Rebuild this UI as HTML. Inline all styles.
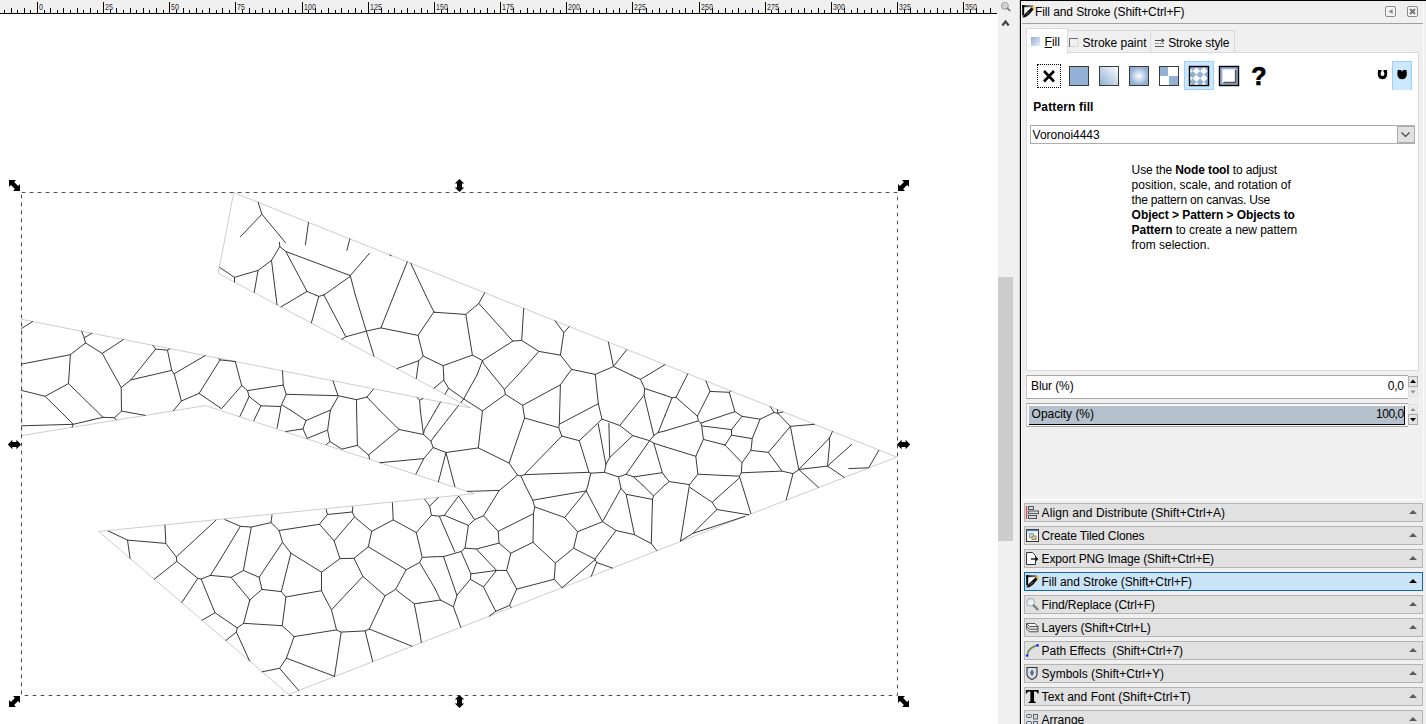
<!DOCTYPE html>
<html lang="en"><head><meta charset="utf-8"><title>Inkscape - Fill and Stroke</title>
<style>
html,body{margin:0;padding:0}
body{width:1426px;height:724px;overflow:hidden;background:#fff;position:relative;font:12px 'Liberation Sans',sans-serif;color:#000}
.a{position:absolute}
.t{position:absolute;white-space:pre;font-size:12px}
svg{position:absolute;overflow:visible}
.di{position:absolute;left:1024px;width:397px;height:17px;border:1px solid #b4b4b4;background:#e1e1e1}
.di.sel{border-color:#1464b4;background:#cce4f7}
.di svg{left:0;top:1px}
.tri{position:absolute;left:384px;top:6px;width:0;height:0;border-left:4px solid transparent;border-right:4px solid transparent;border-bottom:4px solid #5c5c5c}
.sel .tri{border-bottom-color:#000}
.ic{position:absolute;width:18px;height:18px;border:1px solid #222;box-sizing:border-box;top:66px}
</style></head><body>
<div class="a" id="canvas" style="left:0;top:0;width:998px;height:724px;background:#fff"></div><svg id="ruler" width="998" height="15" style="left:0;top:0" shape-rendering="crispEdges"><rect x="0" y="0" width="998" height="13" fill="#f0f0f0"/><rect x="0" y="13" width="997" height="1" fill="#000"/><path d="M4.5 10V13M11.5 8V13M17.5 10V13M24.5 8V13M30.5 10V13M37.5 2V13M44.5 10V13M50.5 8V13M57.5 10V13M63.5 8V13M70.5 10V13M77.5 8V13M83.5 10V13M90.5 8V13M97.5 10V13M103.5 2V13M110.5 10V13M116.5 8V13M123.5 10V13M130.5 8V13M136.5 10V13M143.5 8V13M149.5 10V13M156.5 8V13M163.5 10V13M169.5 2V13M176.5 10V13M183.5 8V13M189.5 10V13M196.5 8V13M202.5 10V13M209.5 8V13M216.5 10V13M222.5 8V13M229.5 10V13M235.5 2V13M242.5 10V13M249.5 8V13M255.5 10V13M262.5 8V13M269.5 10V13M275.5 8V13M282.5 10V13M288.5 8V13M295.5 10V13M302.5 2V13M308.5 10V13M315.5 8V13M321.5 10V13M328.5 8V13M335.5 10V13M341.5 8V13M348.5 10V13M355.5 8V13M361.5 10V13M368.5 2V13M374.5 10V13M381.5 8V13M388.5 10V13M394.5 8V13M401.5 10V13M407.5 8V13M414.5 10V13M421.5 8V13M427.5 10V13M434.5 2V13M441.5 10V13M447.5 8V13M454.5 10V13M460.5 8V13M467.5 10V13M474.5 8V13M480.5 10V13M487.5 8V13M494.5 10V13M500.5 2V13M507.5 10V13M513.5 8V13M520.5 10V13M527.5 8V13M533.5 10V13M540.5 8V13M546.5 10V13M553.5 8V13M560.5 10V13M566.5 2V13M573.5 10V13M580.5 8V13M586.5 10V13M593.5 8V13M599.5 10V13M606.5 8V13M613.5 10V13M619.5 8V13M626.5 10V13M632.5 2V13M639.5 10V13M646.5 8V13M652.5 10V13M659.5 8V13M666.5 10V13M672.5 8V13M679.5 10V13M685.5 8V13M692.5 10V13M699.5 2V13M705.5 10V13M712.5 8V13M718.5 10V13M725.5 8V13M732.5 10V13M738.5 8V13M745.5 10V13M752.5 8V13M758.5 10V13M765.5 2V13M771.5 10V13M778.5 8V13M785.5 10V13M791.5 8V13M798.5 10V13M804.5 8V13M811.5 10V13M818.5 8V13M824.5 10V13M831.5 2V13M838.5 10V13M844.5 8V13M851.5 10V13M857.5 8V13M864.5 10V13M871.5 8V13M877.5 10V13M884.5 8V13M890.5 10V13M897.5 2V13M904.5 10V13M910.5 8V13M917.5 10V13M924.5 8V13M930.5 10V13M937.5 8V13M943.5 10V13M950.5 8V13M957.5 10V13M963.5 2V13M970.5 10V13M976.5 8V13M983.5 10V13M990.5 8V13" stroke="#000" stroke-width="1" fill="none"/></svg><span class="t" style="left:39.0px;top:2.38px;line-height:11px;font-size:9px;color:#2a2a2a;transform:scaleX(0.788);transform-origin:0 0;">0</span><span class="t" style="left:105.0px;top:2.38px;line-height:11px;font-size:9px;color:#2a2a2a;transform:scaleX(0.789);transform-origin:0 0;">25</span><span class="t" style="left:171.0px;top:2.38px;line-height:11px;font-size:9px;color:#2a2a2a;transform:scaleX(0.789);transform-origin:0 0;">50</span><span class="t" style="left:237.0px;top:2.38px;line-height:11px;font-size:9px;color:#2a2a2a;transform:scaleX(0.789);transform-origin:0 0;">75</span><span class="t" style="left:304.0px;top:2.38px;line-height:11px;font-size:9px;color:#2a2a2a;transform:scaleX(0.788);transform-origin:0 0;">100</span><span class="t" style="left:370.0px;top:2.38px;line-height:11px;font-size:9px;color:#2a2a2a;transform:scaleX(0.788);transform-origin:0 0;">125</span><span class="t" style="left:436.0px;top:2.38px;line-height:11px;font-size:9px;color:#2a2a2a;transform:scaleX(0.788);transform-origin:0 0;">150</span><span class="t" style="left:502.0px;top:2.38px;line-height:11px;font-size:9px;color:#2a2a2a;transform:scaleX(0.788);transform-origin:0 0;">175</span><span class="t" style="left:568.0px;top:2.38px;line-height:11px;font-size:9px;color:#2a2a2a;transform:scaleX(0.788);transform-origin:0 0;">200</span><span class="t" style="left:634.0px;top:2.38px;line-height:11px;font-size:9px;color:#2a2a2a;transform:scaleX(0.788);transform-origin:0 0;">225</span><span class="t" style="left:701.0px;top:2.38px;line-height:11px;font-size:9px;color:#2a2a2a;transform:scaleX(0.788);transform-origin:0 0;">250</span><span class="t" style="left:767.0px;top:2.38px;line-height:11px;font-size:9px;color:#2a2a2a;transform:scaleX(0.788);transform-origin:0 0;">275</span><span class="t" style="left:833.0px;top:2.38px;line-height:11px;font-size:9px;color:#2a2a2a;transform:scaleX(0.788);transform-origin:0 0;">300</span><span class="t" style="left:899.0px;top:2.38px;line-height:11px;font-size:9px;color:#2a2a2a;transform:scaleX(0.788);transform-origin:0 0;">325</span><span class="t" style="left:965.0px;top:2.38px;line-height:11px;font-size:9px;color:#2a2a2a;transform:scaleX(0.788);transform-origin:0 0;">350</span><div class="a" style="left:998px;top:0;width:22px;height:724px;background:#f0f0f0"></div><div class="a" style="left:998px;top:277px;width:15px;height:264px;background:#cdcdcd"></div><svg width="16" height="30" style="left:998px;top:0" viewBox="0 0 16 30">
<circle cx="6.9" cy="5.8" r="3.3" fill="#dedede" stroke="#a2a2a2" stroke-width="1.2"/>
<path d="M5.6 4.6V7M7.6 4.6V7" stroke="#b4b4b4" stroke-width=".9"/>
<path d="M9.4 8.2L11.7 10.6" stroke="#6a6a6a" stroke-width="1.5" stroke-linecap="round"/>
<path d="M4.4 25.4L7.55 21.6L10.7 25.4" stroke="#444" stroke-width="2.3" fill="none" stroke-linejoin="miter"/>
</svg><div class="a" style="left:1020px;top:0;width:406px;height:724px;background:#f0f0f0"></div><div class="a" style="left:1020px;top:0;width:406px;height:1px;background:#000"></div><div class="a" style="left:1020px;top:0;width:1px;height:724px;background:#000;box-shadow:-1px 0 0 rgba(0,0,0,.15)"></div><div class="a" style="left:1022px;top:23px;width:401px;height:1px;background:#a0a0a0;"></div><svg width="13" height="13" viewBox="0 0 13 13" style="left:1022px;top:5px">
<defs><linearGradient id="fsg1" gradientUnits="userSpaceOnUse" x1="0" y1="0" x2="11" y2="0"><stop offset="0" stop-color="#000"/><stop offset="1" stop-color="#8a8a8a"/></linearGradient></defs>
<path d="M1 1H11L1.5 11.5Z" fill="#fff"/>
<path d="M0.2 1.2H11" stroke="url(#fsg1)" stroke-width="2"/><path d="M1.2 0.2V10.5" stroke="#000" stroke-width="2"/>
<path d="M0.2 12.6L3.2 8.6L9.6 2.2L11.7 4.2L7.2 9.6L3.4 12.2Z" fill="#0a0a0a"/>
<path d="M10.7 1.6L12.3 1.2L12.4 5.8L11 4.6Z" fill="#f2b400"/>
<path d="M4.2 9.9L7.2 7" stroke="#8a8a8a" stroke-width=".8"/>
</svg><span class="t" style="left:1034.9px;top:5.34px;line-height:15px;letter-spacing:-0.082px;">Fill and Stroke (Shift+Ctrl+F)</span><svg width="40" height="14" viewBox="0 0 40 14" style="left:1383px;top:4px">
<rect x="2.5" y="2.5" width="10" height="10" rx="1.5" fill="#f4f4f4" stroke="#8c8c8c"/>
<path d="M9.6 5L5.4 7.5L9.6 10Z" fill="#8c8c8c"/>
<rect x="24.5" y="2.5" width="10" height="10" rx="1.5" fill="#f4f4f4" stroke="#8c8c8c"/>
<path d="M27 5L32 10M32 5L27 10" stroke="#777" stroke-width="2"/>
</svg><div class="a" style="left:1067px;top:30px;width:84px;height:22px;border:1px solid #d9d9d9;border-bottom:none;background:#f0f0f0"></div><div class="a" style="left:1151px;top:30px;width:83px;height:22px;border:1px solid #d9d9d9;border-bottom:none;border-left:1px solid #d9d9d9;margin-left:-1px;background:#f0f0f0"></div><div class="a" style="left:1026px;top:52px;width:391px;height:317px;border:1px solid #d9d9d9;background:#fff"></div><div class="a" style="left:1026px;top:28px;width:40px;height:25px;border:1px solid #d9d9d9;border-bottom:none;background:#fff"></div><svg width="10" height="10" style="left:1031px;top:37px"><defs><linearGradient id="tg1" x1="0" y1="0" x2="1" y2="1"><stop offset="0" stop-color="#8fabcf"/><stop offset="1" stop-color="#eef3f9"/></linearGradient></defs><rect width="9" height="9" fill="url(#tg1)"/></svg><span class="t" style="left:1044.6px;top:35.34px;line-height:15px;letter-spacing:-0.036px;"><u>F</u>ill</span><svg width="10" height="10" style="left:1069px;top:38px"><path d="M0.5 9V0.5H9" stroke="#6a6a6a" fill="none"/><path d="M9 0.5V8.5H1" stroke="#d8d8d8" fill="none"/></svg><span class="t" style="left:1082.6px;top:36.34px;line-height:15px;letter-spacing:-0.012px;">Stroke paint</span><svg width="10" height="10" style="left:1155px;top:38px"><path d="M0 2.5H6M7 0.8L9.2 2.5L7 4.2Z" stroke="#444" stroke-width="1" fill="#444"/><path d="M0 5.5H9" stroke="#777" stroke-dasharray="1.5 1"/><path d="M0 8.5H9" stroke="#555"/></svg><span class="t" style="left:1168.2px;top:36.34px;line-height:15px;letter-spacing:-0.125px;">Stroke style</span><div class="a" style="left:1184px;top:61px;width:28px;height:27px;border:1px solid #99d1ff;background:#cce8ff"></div><div class="a" style="left:1392px;top:61px;width:18px;height:28px;border:1px solid #99d1ff;background:#cce8ff;border-bottom:none"></div><div class="a" style="left:1037px;top:64px;width:22px;height:22px;border:1px dotted #000"></div><svg width="24" height="24" style="left:1037px;top:64px"><path d="M7 7L17 17.5M17 7L7 17.5" stroke="#000" stroke-width="2.6"/></svg><svg width="200" height="22" style="left:1068px;top:65px" viewBox="0 0 200 22">
<defs>
<linearGradient id="lg1" x1="0" y1="1" x2="1" y2="0"><stop offset="0" stop-color="#8eaed2"/><stop offset="1" stop-color="#fff"/></linearGradient>
<radialGradient id="rg1"><stop offset="0" stop-color="#fff"/><stop offset="1" stop-color="#8eaed2"/></radialGradient>
<pattern id="dia" x="-0.3" y="0.9" width="7.4" height="7.4" patternUnits="userSpaceOnUse"><path d="M3.7 0L7.4 3.7L3.7 7.4L0 3.7Z" fill="#93b1d5"/></pattern>
</defs>
<rect x="1.5" y="1.5" width="19" height="19" fill="#93b1d5" stroke="#3a3a3a"/>
<rect x="31.5" y="1.5" width="19" height="19" fill="url(#lg1)" stroke="#3a3a3a"/>
<rect x="61.5" y="1.5" width="19" height="19" fill="url(#rg1)" stroke="#3a3a3a"/>
<rect x="91.5" y="1.5" width="19" height="19" fill="#fff" stroke="#3a3a3a"/>
<rect x="92" y="2" width="8" height="9" fill="#93b1d5"/><rect x="101" y="11" width="9" height="9" fill="#93b1d5"/>
<rect x="121.5" y="1.5" width="19" height="19" fill="#fff"/>
<clipPath id="pc"><rect x="122" y="2" width="18" height="18"/></clipPath><path clip-path="url(#pc)" d="M117.4 -1.5L121.10000000000001 2.2L117.4 5.9L113.7 2.2ZM117.4 5.8999999999999995L121.10000000000001 9.6L117.4 13.3L113.7 9.6ZM117.4 13.25L121.10000000000001 16.95L117.4 20.65L113.7 16.95ZM117.4 20.6L121.10000000000001 24.3L117.4 28.0L113.7 24.3ZM124.8 -1.5L128.5 2.2L124.8 5.9L121.1 2.2ZM124.8 5.8999999999999995L128.5 9.6L124.8 13.3L121.1 9.6ZM124.8 13.25L128.5 16.95L124.8 20.65L121.1 16.95ZM124.8 20.6L128.5 24.3L124.8 28.0L121.1 24.3ZM132.1 -1.5L135.79999999999998 2.2L132.1 5.9L128.4 2.2ZM132.1 5.8999999999999995L135.79999999999998 9.6L132.1 13.3L128.4 9.6ZM132.1 13.25L135.79999999999998 16.95L132.1 20.65L128.4 16.95ZM132.1 20.6L135.79999999999998 24.3L132.1 28.0L128.4 24.3ZM139.5 -1.5L143.2 2.2L139.5 5.9L135.8 2.2ZM139.5 5.8999999999999995L143.2 9.6L139.5 13.3L135.8 9.6ZM139.5 13.25L143.2 16.95L139.5 20.65L135.8 16.95ZM139.5 20.6L143.2 24.3L139.5 28.0L135.8 24.3Z" fill="#93b1d5"/><rect x="121.5" y="1.5" width="19" height="19" fill="none" stroke="#000" stroke-width="1.4"/>
<rect x="151.5" y="1.5" width="19" height="19" fill="#93b1d5" stroke="#000" stroke-width="1.4"/>
<rect x="154.4" y="4.3" width="13" height="13.3" fill="#fff"/>
<path d="M167.6 5V17.4H155.5" stroke="#555" stroke-width="1.5" fill="none"/>
</svg><span class="t" style="left:1251.2px;top:60.84px;line-height:31px;font-size:25px;font-weight:bold;"><span style="-webkit-text-stroke:0.7px #000">?</span></span><svg width="40" height="12" style="left:1377.5px;top:70.3px" viewBox="0 0 40 12">
<path d="M0 0H3.5V1.6C2.6 2.6 2.4 4.2 2.9 5.2C3.4 6.3 5.6 6.3 6.1 5.2C6.6 4.2 6.4 2.6 5.5 1.6V0H9V1.4C9.7 4 9.2 9.2 4.5 9.2C-0.2 9.2 -0.7 4 0 1.4Z" fill="#000"/>
<path transform="translate(19.6 0)" d="M0 0H3.5L4.5 1.8L5.5 0H9V1.4C9.7 4 9.2 9.2 4.5 9.2C-0.2 9.2 -0.7 4 0 1.4Z" fill="#000"/>
</svg><span class="t" style="left:1033.2px;top:99.84px;line-height:15px;font-weight:bold;letter-spacing:0.143px;">Pattern fill</span><div class="a" style="left:1030px;top:125px;width:383px;height:17px;border:1px solid #adadad;background:#fff"></div><div class="a" style="left:1397px;top:126px;width:16px;height:15px;border:1px solid #adadad;background:#e1e1e1"></div><svg width="12" height="8" style="left:1400px;top:131px"><path d="M1.5 1.5L5.5 5.5L9.5 1.5" stroke="#444" stroke-width="1.2" fill="none"/></svg><span class="t" style="left:1032.6px;top:127.84px;line-height:15px;letter-spacing:-0.037px;">Voronoi4443</span><span class="t" style="left:1131.6px;top:162.84px;line-height:15px;letter-spacing:-0.123px;">Use the <b>Node tool</b> to adjust</span><span class="t" style="left:1131.6px;top:177.84px;line-height:15px;letter-spacing:-0.007px;">position, scale, and rotation of</span><span class="t" style="left:1131.6px;top:192.84px;line-height:15px;letter-spacing:-0.189px;">the pattern on canvas. Use</span><span class="t" style="left:1131.6px;top:207.84px;line-height:15px;font-weight:bold;letter-spacing:-0.049px;">Object &gt; Pattern &gt; Objects to</span><span class="t" style="left:1131.6px;top:222.84px;line-height:15px;letter-spacing:-0.059px;"><b>Pattern</b> to create a new pattern</span><span class="t" style="left:1131.6px;top:237.84px;line-height:15px;letter-spacing:0.011px;">from selection.</span><div class="a" style="left:1026px;top:375px;width:381px;height:22px;border-top:1px solid #a8a8a8;border-bottom:1px solid #a8a8a8;border-left:1px solid #c8c8c8;background:#fff"></div><span class="t" style="left:1031.0px;top:378.84px;line-height:15px;letter-spacing:-0.093px;">Blur (%)</span><span class="t" style="left:1387.8px;top:378.84px;line-height:15px;letter-spacing:-0.229px;">0,0</span><div class="a" style="left:1026px;top:403px;width:381px;height:22px;border-top:1px solid #a8a8a8;border-bottom:1px solid #a8a8a8;border-left:1px solid #c8c8c8;background:#f6f6f6"></div><div class="a" style="left:1029px;top:406px;width:375px;height:18px;background:#b5c1cc;border-right:1px solid #000;border-bottom:1px solid #000"></div><span class="t" style="left:1031.6px;top:406.84px;line-height:15px;letter-spacing:-0.026px;">Opacity (%)</span><span class="t" style="left:1376.0px;top:406.84px;line-height:15px;letter-spacing:-0.486px;">100,0</span><svg width="12" height="52" style="left:1407px;top:375px" viewBox="0 0 12 52">
<rect x="1.5" y="1.5" width="9" height="10" fill="#e4e4e4" stroke="#adadad"/><path d="M3 8L6 4.5L9 8Z" fill="#000"/>
<rect x="1.5" y="12.5" width="9" height="9" fill="#ececec" stroke="#e0e0e0"/><path d="M3.5 15.5L6 18.5L8.5 15.5Z" fill="#8a8a8a"/>
<rect x="1.5" y="29.5" width="9" height="9" fill="#ececec" stroke="#e0e0e0"/><path d="M3.5 36L6 33L8.5 36Z" fill="#8a8a8a"/>
<rect x="1.5" y="39.5" width="9" height="10" fill="#e4e4e4" stroke="#adadad"/><path d="M3 43L6 46.5L9 43Z" fill="#000"/>
</svg><div class="a" style="left:1021px;top:499px;width:403px;height:1px;background:#fff"></div><div class="a" style="left:1423px;top:1px;width:1px;height:499px;background:#fbfbfb"></div><div class="a" style="left:1021px;top:500px;width:1px;height:224px;background:#fff"></div><div class="a" style="left:1021px;top:1px;width:1px;height:498px;background:#f8f8f8"></div><div class="di" style="top:503px"><svg width="15" height="15" viewBox="0 0 15 15"><path d="M1.5 1V14" stroke="#d64545" stroke-width="1.3"/><rect x="3.5" y="1.5" width="5" height="3" fill="#c9dcf0" stroke="#555"/><rect x="3.5" y="6" width="10" height="2.6" fill="#c9dcf0" stroke="#555"/><rect x="3.5" y="10.5" width="8" height="3" fill="#c9dcf0" stroke="#555"/></svg><i class="tri"></i></div><span class="t" style="left:1041.6px;top:506.14px;line-height:15px;letter-spacing:0.098px;">Align and Distribute (Shift+Ctrl+A)</span><div class="di" style="top:526px"><svg width="15" height="15" viewBox="0 0 15 15"><rect x="1.5" y="1.5" width="12" height="12" fill="#f4f4f4" stroke="#333"/><path d="M1.5 2.5H13.5" stroke="#5b83b7" stroke-width="1.4"/><rect x="4.5" y="5.5" width="4" height="4" fill="#c9dcf0" stroke="#8aa"/><rect x="7" y="8" width="4" height="3.5" fill="#f0c96a" stroke="#777" stroke-width=".8"/></svg><i class="tri"></i></div><span class="t" style="left:1041.6px;top:529.14px;line-height:15px;letter-spacing:-0.136px;">Create Tiled Clones</span><div class="di" style="top:549px"><svg width="15" height="15" viewBox="0 0 15 15"><path d="M1.5 1.5H7.5L10.5 4.5V13.5H1.5Z" fill="#fafafa" stroke="#333"/><path d="M6 8H11" stroke="#333" stroke-width="1.6"/><path d="M10.6 5.6L13.5 8L10.6 10.4Z" fill="#111"/></svg><i class="tri"></i></div><span class="t" style="left:1041.6px;top:552.14px;line-height:15px;letter-spacing:-0.140px;">Export PNG Image (Shift+Ctrl+E)</span><div class="di sel" style="top:572px"><i class="tri"></i></div><svg width="13" height="13" viewBox="0 0 13 13" style="left:1026px;top:575px">
<defs><linearGradient id="fsg2" gradientUnits="userSpaceOnUse" x1="0" y1="0" x2="11" y2="0"><stop offset="0" stop-color="#000"/><stop offset="1" stop-color="#8a8a8a"/></linearGradient></defs>
<path d="M1 1H11L1.5 11.5Z" fill="#fff"/>
<path d="M0.2 1.2H11" stroke="url(#fsg2)" stroke-width="2"/><path d="M1.2 0.2V10.5" stroke="#000" stroke-width="2"/>
<path d="M0.2 12.6L3.2 8.6L9.6 2.2L11.7 4.2L7.2 9.6L3.4 12.2Z" fill="#0a0a0a"/>
<path d="M10.7 1.6L12.3 1.2L12.4 5.8L11 4.6Z" fill="#f2b400"/>
<path d="M4.2 9.9L7.2 7" stroke="#8a8a8a" stroke-width=".8"/>
</svg><span class="t" style="left:1041.6px;top:575.14px;line-height:15px;letter-spacing:-0.058px;">Fill and Stroke (Shift+Ctrl+F)</span><div class="di" style="top:595px"><svg width="15" height="15" viewBox="0 0 15 15"><circle cx="5.6" cy="5.4" r="3.8" fill="#e9eff6" stroke="#aeb4ba" stroke-width="1.2"/><path d="M8.6 8.4L12.6 12.4" stroke="#7d7d7d" stroke-width="2.2" stroke-linecap="round"/></svg><i class="tri"></i></div><span class="t" style="left:1041.6px;top:598.14px;line-height:15px;letter-spacing:-0.082px;">Find/Replace (Ctrl+F)</span><div class="di" style="top:618px"><svg width="15" height="15" viewBox="0 0 15 15"><path d="M1.5 3.5H10L13 6.5H4.5Z" fill="#f6f6f6" stroke="#444" stroke-width=".9"/><path d="M1.5 6.2L4.5 9.2H13V6.5M1.5 8.8L4.5 11.8H13V9.2M1.5 3.5V8.8" fill="none" stroke="#444" stroke-width=".9"/></svg><i class="tri"></i></div><span class="t" style="left:1041.6px;top:621.14px;line-height:15px;letter-spacing:-0.072px;">Layers (Shift+Ctrl+L)</span><div class="di" style="top:641px"><svg width="15" height="15" viewBox="0 0 15 15"><path d="M2 12.5C3 7 6 3.5 12.5 2.5" stroke="#3a8a2a" stroke-width="1.3" fill="none"/><path d="M2 12L4 6M3 9.5L6.5 5M5 7L9 3.6M7.5 5L11 3" stroke="#888" stroke-width=".8"/><circle cx="2.2" cy="12.6" r="1.4" fill="#2233ee"/><circle cx="12.6" cy="2.4" r="1.4" fill="#2233ee"/></svg><i class="tri"></i></div><span class="t" style="left:1041.6px;top:644.14px;line-height:15px;letter-spacing:-0.040px;">Path Effects  (Shift+Ctrl+7)</span><div class="di" style="top:664px"><svg width="15" height="15" viewBox="0 0 15 15"><path d="M2 1.5H12V8C12 11 9.5 12.5 7 13.5C4.5 12.5 2 11 2 8Z" fill="#d6e0ea" stroke="#333" stroke-width="1.1"/><path d="M7 3.5L9 6.5L7 10.5L5 6.5Z" fill="#5a6a7a"/></svg><i class="tri"></i></div><span class="t" style="left:1041.6px;top:667.14px;line-height:15px;letter-spacing:0.016px;">Symbols (Shift+Ctrl+Y)</span><div class="di" style="top:687px"><svg width="15" height="15" viewBox="0 0 15 15"><path d="M0.8 1H13.6V4.6H12.6C12.3 3 11.6 2.4 9 2.4V11.6C9 12.6 9.6 12.9 10.8 13V14H3.6V13C4.8 12.9 5.4 12.6 5.4 11.6V2.4C2.8 2.4 2.1 3 1.8 4.6H0.8Z" fill="#000"/></svg><i class="tri"></i></div><span class="t" style="left:1041.6px;top:690.14px;line-height:15px;letter-spacing:0.044px;">Text and Font (Shift+Ctrl+T)</span><div class="di" style="top:710px"><svg width="15" height="15" viewBox="0 0 15 15"><rect x="1.5" y="2.5" width="5" height="3" rx=".8" fill="#c9dcf0" stroke="#666"/><rect x="8.5" y="2.5" width="4" height="4.5" fill="#c9dcf0" stroke="#666"/><rect x="1.5" y="9.5" width="5" height="5" rx=".8" fill="#c9dcf0" stroke="#666"/><rect x="8.5" y="9.5" width="4" height="5" fill="#c9dcf0" stroke="#666"/></svg><i class="tri"></i></div><span class="t" style="left:1041.6px;top:713.14px;line-height:15px;letter-spacing:-0.000px;">Arrange</span><svg id="drawing" width="998" height="724" viewBox="0 0 998 724" style="left:0;top:0"><path d="M233.7 192.6L896.7 457.1L288.6 694.5L98.8 531.5L474.4 493.7L205.5 405.6L21.7 435.5L21.7 319.4L470.5 407.9L218.2 273.4Z" fill="none" stroke="#bcbcbc" stroke-width="0.75"/><path d="M258.2 202.4L261.9 214.2L240.4 236.7M261.9 214.2L285.5 242.6M308.5 222.4L305.4 244.8M349.8 238.9L346.9 250.4M279.4 242.3L279.8 246.5L271.5 260.4L258.1 270.4L234.5 277.3L219.7 267.5M234.5 277.3L234.5 282.1M279.8 246.5L285.8 251.5L350.3 275.6L369.6 253.2M285.8 251.5L307.0 291.4L315.5 295.0M323.9 295.0L350.3 276.3M307.0 291.4L301.0 295.0M258.1 270.4L254.2 292.4M271.5 260.4L275.8 295.0M350.3 275.6L355.3 295.0M407.3 261.8L394.0 295.0M410.7 263.2L425.6 295.0M389.8 255.1L391.2 255.7M275.8 295.0L277.0 304.7M281.1 306.8L301.0 295.0M315.5 295.0L318.8 296.4L323.7 295.0L323.9 295.0M318.8 296.4L311.4 322.8M323.9 295.0L345.8 336.8L341.8 339.3M345.8 336.8L366.3 331.1L380.9 327.9L418.0 335.4L433.9 311.9L435.0 312.3M355.3 295.0L366.3 331.1L373.9 356.0M394.0 295.0L380.9 327.9M425.6 295.0L433.9 311.9M418.0 335.4L423.2 356.0L435.0 361.8M423.2 356.0L418.8 360.7L396.9 368.6M418.8 360.7L416.3 378.4M435.0 387.4L434.0 388.4M220.0 359.9L235.3 361.5M235.3 361.5L241.7 385.6L247.5 390.6L283.3 385.1L282.5 370.8M241.7 385.6L221.5 408.7L220.0 407.7M247.5 390.6L249.1 396.4L260.9 405.8L280.8 406.5L286.2 394.3L283.3 385.1M249.1 396.4L243.0 410.0M260.9 405.8L258.9 410.0M280.8 406.5L280.5 410.0M282.5 405.3L290.3 410.0M286.2 394.3L338.0 395.7L333.0 380.9M338.0 395.7L356.5 399.7L367.0 397.0L373.4 389.3M338.0 396.9L330.5 410.0M356.5 399.7L356.6 410.0M367.0 397.0L379.3 410.0M417.1 397.7L419.6 400.2L420.3 410.0M419.6 400.2L423.0 398.5M21.9 328.3L32.6 321.5M81.7 331.2L84.2 337.9L85.5 342.9M84.2 337.9L91.7 333.3M85.5 342.9L70.4 354.7L21.9 364.0M85.5 342.9L102.2 353.4L123.4 339.6M102.2 353.4L121.2 387.5L121.5 411.1L114.4 417.8M70.4 354.7L68.5 383.6L45.1 396.3L21.9 390.5M45.1 396.3L69.0 420.0M68.5 383.6L103.0 417.3L114.4 417.8L116.5 420.0M103.0 417.3L90.9 420.0M121.5 411.1L145.2 415.4M121.2 387.5L130.9 379.9L155.7 349.1L152.8 345.4M155.7 349.1L167.5 350.2L169.6 348.8M167.5 350.2L171.7 370.4L174.2 373.7M130.9 379.9L171.7 370.4M174.2 373.7L205.2 355.6M174.2 373.7L181.4 401.0L173.4 410.7M181.4 401.0L199.1 393.4L220.0 359.9M220.0 359.9L218.8 358.6M199.1 393.4L220.0 407.7M69.0 420.1L73.2 424.3L21.9 425.8M73.2 424.3L72.1 427.3M73.2 424.3L90.9 420.2M243.0 410.0L239.9 416.3M258.9 410.0L253.9 420.5M280.5 410.0L277.1 428.1M290.3 410.0L306.0 420.5L330.4 410.1L330.5 410.0M306.0 420.5L303.0 428.9L285.8 431.5M303.0 428.9L307.2 438.4L327.1 430.3M330.4 410.1L327.6 430.3L329.9 441.6L341.9 449.1L357.4 445.4L356.6 410.0M329.9 441.6L326.2 444.6M357.4 445.4L368.6 455.0L399.1 429.5L379.3 410.0M368.6 455.0L369.6 458.9M399.1 429.5L423.5 434.5L420.3 410.0M423.5 434.5L424.3 430.0L435.0 411.4M423.5 434.5L430.9 441.2L433.1 447.5L435.0 448.2M430.9 441.2L435.0 435.6M433.1 447.5L423.8 458.6L379.8 462.7M423.8 458.6L415.9 474.1M435.0 312.3L465.8 314.4L478.8 303.4L484.7 292.8M465.8 314.4L472.4 355.1L443.1 365.7L435.0 361.8M443.1 365.7L443.7 375.0M478.8 303.4L512.8 341.1L521.7 340.4L523.7 308.5M512.8 341.1L482.5 360.5L472.4 355.1M482.5 360.5L477.0 375.0M482.5 360.5L483.5 363.5L492.7 375.0M521.7 340.4L538.9 351.4L518.0 375.0M538.9 351.4L560.4 355.1L563.8 332.7L555.0 320.8M563.8 332.7L569.3 326.5M560.4 355.1L571.7 369.4L567.4 375.0M571.7 369.4L595.3 374.4L595.3 375.0M595.3 374.4L613.5 366.5L608.4 342.1M613.5 366.5L626.6 349.7M613.5 366.5L631.1 375.0M647.8 375.0L664.9 364.6M443.7 375.0L443.8 380.1L448.5 388.2L463.7 398.9L482.5 410.9L505.4 394.4L504.4 389.4L492.7 375.0M443.8 380.1L435.0 387.4M448.5 388.2L445.0 394.3M440.5 402.0L435.0 411.4M463.7 398.9L460.7 402.7M458.5 405.5L435.0 435.6M477.0 375.0L463.7 398.9M505.4 394.4L522.6 405.3L560.4 384.8L567.4 375.0M504.4 389.4L518.0 375.0M522.6 405.3L524.6 418.0L558.8 427.7L559.3 424.2L560.4 384.8M559.3 424.2L598.3 403.7M558.8 427.7L561.8 436.1L579.3 440.7L602.0 419.1L598.3 403.7L595.3 375.0M602.0 419.1L619.8 425.5L644.1 395.2L644.6 388.5L640.4 379.3L631.1 375.0M640.4 379.3L647.8 375.0M644.6 388.5L665.0 395.2M644.1 395.2L653.8 435.6L649.6 440.7L632.8 435.6L619.8 425.5M653.8 435.6L658.1 432.6L665.0 415.4M658.1 432.6L665.0 430.9M649.6 440.7L653.8 443.2L665.0 446.8M653.8 443.2L662.3 472.7L665.0 476.4M649.6 440.7L626.1 474.3L618.5 476.9L604.5 472.3L590.7 473.2L589.0 472.3L524.2 474.7L520.9 476.0L517.5 475.2L509.1 463.1L524.6 418.0M626.1 474.3L633.6 476.9L662.3 472.7M633.6 476.9L642.6 485.0M579.3 440.7L589.0 472.3M598.3 424.2L605.9 464.6L604.5 472.3M608.9 423.5L609.7 457.5L605.9 464.6M609.7 457.5L632.8 435.6M561.8 436.1L524.2 474.7M509.1 463.1L478.3 447.9L482.5 410.9M478.3 447.9L446.0 452.5L435.0 448.2M446.0 452.5L438.4 481.9M446.0 452.5L454.4 485.0M517.5 475.2L506.0 485.0M520.9 476.0L525.0 485.0M590.7 473.2L588.1 485.0M618.5 476.9L620.3 485.0M454.4 485.0L454.9 486.7M467.4 491.4L499.3 490.4L506.0 485.0M499.3 490.4L483.5 515.8L474.6 519.6L458.6 496.0L444.3 515.3L439.3 516.2L435.0 515.7M439.3 516.2L454.9 552.0M444.3 515.3L468.4 525.4L474.6 519.6M468.4 525.4L465.0 548.2L461.1 551.5L443.5 556.6L435.0 556.7M435.0 500.6L438.4 497.7M483.5 515.8L498.2 531.3L533.5 513.7L534.7 506.9L532.7 500.2L525.0 485.0M532.7 500.2L586.2 490.9L588.1 485.0M534.7 506.9L564.6 517.5L586.2 490.9M586.2 490.9L602.5 521.7L621.0 488.4L620.3 485.0M621.0 488.4L626.1 494.3L652.5 499.4L653.5 496.0L642.6 485.0M653.5 496.0L664.6 485.3M626.1 494.3L634.5 534.7L616.0 530.5L602.5 521.7M652.5 499.4L651.3 543.6L634.5 534.7M651.3 543.6L656.9 550.7M564.6 517.5L577.6 531.7L602.5 521.7M577.6 531.7L573.6 548.2L555.4 563.0L533.0 542.3L533.5 513.7M616.0 530.5L594.9 559.1L573.6 548.2M594.9 559.1L596.6 562.5L612.3 568.0M596.6 562.5L591.3 576.3M594.9 559.9L562.1 587.7M555.4 563.0L554.2 579.3L562.1 587.7M554.2 579.3L516.7 589.1L506.6 570.5L510.8 553.2L533.0 542.3M510.8 553.2L499.0 543.1L498.2 531.3M499.0 543.1L476.3 549.0L465.0 548.2M476.3 549.0L496.5 570.4L506.6 570.5M496.5 570.4L470.9 573.9L461.1 551.5M470.9 573.9L470.4 579.3L483.5 586.9L496.5 570.4M470.4 579.3L456.9 595.3L443.5 556.6M456.9 595.3L455.6 600.0M483.5 586.9L489.9 600.0M516.7 589.1L511.8 600.0M435.0 588.5L440.4 600.0M224.9 519.6L240.4 526.3L251.3 527.1L271.0 522.6L272.0 515.0M240.4 526.3L220.0 560.0M220.0 576.3L231.1 577.3L243.4 570.5L251.3 527.1M231.1 577.3L249.8 600.0M243.4 570.5L259.2 577.3L282.5 542.3L279.1 530.5L271.0 522.6M279.1 530.5L319.5 524.3L327.4 514.5L326.2 509.5M327.4 514.5L352.3 512.0L352.8 506.9M352.3 512.0L354.5 517.0L371.7 531.3L393.2 519.9L392.4 502.7M354.5 517.0L334.1 540.9L319.5 524.3M334.1 540.9L340.0 558.6L354.0 558.3L368.3 546.8L371.7 531.3M393.2 519.9L416.3 532.5L431.4 515.3L429.7 506.1L424.7 499.4M429.7 506.1L435.0 500.6M431.4 515.3L435.0 515.7M416.3 532.5L422.2 557.4L435.0 556.7M422.2 557.4L419.6 562.5L406.2 569.7L368.3 546.8M419.6 562.5L435.0 588.5M406.2 569.7L395.6 589.4L385.1 595.8L362.9 576.4L354.0 558.3M395.6 589.4L409.3 600.0M385.1 595.8L383.0 600.0M362.9 576.4L340.6 600.0M340.0 558.6L321.5 572.2L290.9 553.2L282.5 542.3M290.9 553.2L281.3 591.6L261.9 589.4L259.2 577.3M261.9 589.4L249.8 600.0M281.3 591.6L285.8 597.0L321.5 590.7L321.5 572.2M285.8 597.0L285.6 600.0M321.5 590.7L326.2 600.0M108.6 531.1L127.5 540.1L165.8 543.4L165.0 525.2M127.5 540.1L130.1 558.4M165.8 543.4L176.3 556.9L216.0 520.2M176.3 556.9L176.8 561.4L154.4 579.1M176.8 561.4L197.8 578.3L183.5 600.0M197.8 578.3L201.2 579.1L210.4 575.4L220.0 560.0M220.0 576.3L210.4 575.4M201.2 579.1L209.7 600.0M183.5 600.0L181.4 602.5M209.7 600.0L215.0 612.7L202.1 620.2M215.0 612.7L237.2 627.9L243.6 623.3L249.3 601.8L249.8 600.0M249.3 601.8L249.8 600.0M237.2 627.9L236.4 632.1L225.8 640.5M236.4 632.1L249.6 661.0M262.2 671.8L279.6 668.3L286.4 658.2L294.1 636.6L282.2 625.7L243.6 623.3M279.6 668.3L298.7 690.5M286.4 658.2L334.5 676.3M294.1 636.6L336.5 629.9L341.2 632.1L334.5 676.3M282.2 625.7L285.6 600.0M326.2 600.0L331.5 609.9L336.5 629.9M331.5 609.9L340.6 600.0M341.2 632.1L365.1 630.9L369.3 629.0L383.0 600.0M409.3 600.0L414.3 603.8L420.0 603.0M414.3 603.8L420.0 634.0M365.1 630.9L372.7 661.5M369.3 629.0L412.1 646.3M440.4 600.0L420.0 603.0M420.0 634.0L421.4 642.5M440.4 600.0L453.4 606.8L455.6 600.0M453.4 606.8L460.8 627.3M489.9 600.0L495.8 611.3L509.6 605.4L511.8 600.0M495.8 611.3L489.5 616.1M509.6 605.4L511.0 607.5M665.0 395.2L672.1 397.8L676.0 397.3L687.8 373.8M672.1 397.8L665.0 415.4M676.0 397.3L697.4 416.2L710.0 391.4L706.0 381.0M710.0 391.4L729.3 392.3L730.7 390.9M729.3 392.3L734.9 411.6L700.7 423.1L698.4 420.9L697.4 416.2M698.4 420.9L665.0 430.9M700.7 423.1L701.7 425.9L731.5 429.6L742.0 416.3L734.9 411.6M742.0 416.3L760.1 419.2L774.1 412.5L770.3 406.7M774.1 412.5L777.8 413.3L777.4 409.5M777.8 413.3L782.9 412.0M777.8 413.3L790.4 426.3L814.4 424.3M790.4 426.3L774.8 445.0M790.4 426.3L793.9 445.0M760.1 419.2L752.2 438.6L731.5 435.2L731.5 429.6M752.2 438.6L751.6 445.0M731.5 435.2L725.0 445.0M725.0 445.0L703.4 439.4L701.7 425.9M703.4 439.4L700.8 445.0M832.4 431.5L829.6 437.7L822.8 445.0M829.6 437.7L829.5 445.0M851.5 444.4L851.0 445.0M665.0 446.8L695.8 456.3L700.8 445.0M695.8 456.3L697.9 474.2L689.5 484.6L669.3 481.6L665.0 476.4M669.3 481.6L664.6 485.3M725.0 445.0L725.3 445.4L725.0 445.0M725.3 445.4L742.0 462.7L750.9 450.4L751.6 445.0M750.9 450.4L768.2 452.3L774.8 445.0M742.0 462.7L741.3 472.8L739.4 476.2L697.9 474.2M741.3 472.8L782.0 471.1L768.2 452.3M782.0 471.1L793.0 473.7L798.8 469.5L793.9 445.0M798.8 469.5L822.8 445.0M829.5 445.0L827.5 466.1L798.8 469.5M827.5 466.1L851.0 445.0M827.5 466.1L844.3 477.4M798.8 469.5L818.5 487.5M793.0 473.7L786.2 499.7M739.4 476.2L750.9 513.5M739.4 477.9L712.2 502.3L716.9 509.5L748.8 514.8M712.2 502.3L690.0 487.5M689.5 484.6L680.5 541.0M716.9 509.5L692.8 533.4L680.5 541.0M692.8 533.4L744.9 516.4M848.8 468.6L868.7 467.8L878.8 450.4" fill="none" stroke="#3a3a3a" stroke-width="1" stroke-linecap="round" stroke-linejoin="round"/><path d="M21.5 192.5H897.5V695.5H21.5Z" fill="none" stroke="#000" stroke-opacity=".7" stroke-width="1" stroke-dasharray="3.7 4.3" stroke-dashoffset="-0.2"/><path transform="translate(14.5 185.5)" d="M-5.5 -5.5H1.5L-0.4 -3.6L3.6 0.4L5.5 -1.5V5.5H-1.5L0.4 3.6L-3.6 -0.4L-5.5 1.5Z" fill="#000"/><path transform="translate(459.5 185.5) rotate(90)" d="M-6.6 0L-2 -4.7V-2.5H2V-4.7L6.6 0L2 4.7V2.5H-2V4.7Z" fill="#000"/><path transform="translate(903.5 185.5) scale(-1 1)" d="M-5.5 -5.5H1.5L-0.4 -3.6L3.6 0.4L5.5 -1.5V5.5H-1.5L0.4 3.6L-3.6 -0.4L-5.5 1.5Z" fill="#000"/><path transform="translate(14.4 444.5)" d="M-6.6 0L-2 -4.7V-2.5H2V-4.7L6.6 0L2 4.7V2.5H-2V4.7Z" fill="#000"/><path transform="translate(903.6 444.5)" d="M-6.6 0L-2 -4.7V-2.5H2V-4.7L6.6 0L2 4.7V2.5H-2V4.7Z" fill="#000"/><path transform="translate(14.5 701.5) scale(-1 1)" d="M-5.5 -5.5H1.5L-0.4 -3.6L3.6 0.4L5.5 -1.5V5.5H-1.5L0.4 3.6L-3.6 -0.4L-5.5 1.5Z" fill="#000"/><path transform="translate(459.5 701.5) rotate(90)" d="M-6.6 0L-2 -4.7V-2.5H2V-4.7L6.6 0L2 4.7V2.5H-2V4.7Z" fill="#000"/><path transform="translate(903.5 701.5)" d="M-5.5 -5.5H1.5L-0.4 -3.6L3.6 0.4L5.5 -1.5V5.5H-1.5L0.4 3.6L-3.6 -0.4L-5.5 1.5Z" fill="#000"/></svg></body></html>
